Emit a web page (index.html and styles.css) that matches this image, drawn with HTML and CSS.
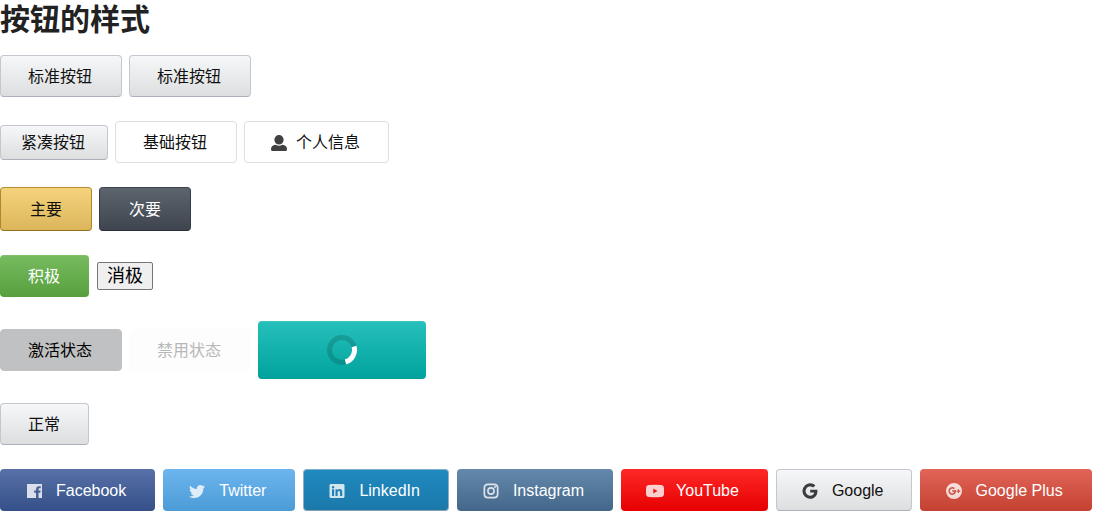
FILE: index.html
```
<!DOCTYPE html>
<html lang="zh-CN">
<head>
  <meta charset="UTF-8">
  <title>按钮的样式</title>
  <link rel="stylesheet" href="styles.css">
</head>
<body>

<h1>按钮的样式</h1>

<div class="row">
  <button class="btn">标准按钮</button>
  <button class="btn">标准按钮</button>
</div>

<div class="row">
  <button class="btn compact">紧凑按钮</button>
  <button class="btn basic">基础按钮</button>
  <button class="btn basic with-user">
    <svg class="icon" viewBox="0 0 16 16"><path d="M8 0a4.6 4.6 0 0 1 4.600 4.800C12.600 7.600 10.600 9.600 8 9.600S3.400 7.600 3.400 4.800A4.600 4.600 0 0 1 8 0zM4.500 9.800Q8 11.800 11.500 9.800Q16 10.500 16 14v.5q0 1.500-1.500 1.500h-13Q0 16 0 14.500V14q0-3.500 4.500-4.200z"/></svg>
    个人信息
  </button>
</div>

<div class="row">
  <button class="btn primary">主要</button>
  <button class="btn secondary">次要</button>
</div>

<div class="row wide">
  <button class="btn short positive">积极</button>
  <button class="plain">消极</button>
</div>

<div class="row">
  <button class="btn active">激活状态</button>
  <button class="btn disabled" disabled>禁用状态</button>
  <button class="btn loading" aria-label="加载中">
    <svg class="spinner" viewBox="0 0 30 30">
      <circle class="track" cx="15" cy="15" r="12.500"/>
      <path class="arc" d="M27 11.500A12.500 12.500 0 0 1 18.500 27"/>
    </svg>
  </button>
</div>

<div class="row">
  <button class="btn short">正常</button>
</div>

<div class="row wide">
  <button class="btn social facebook">
    <svg class="icon" viewBox="0 0 16 16"><path d="M1 1h15v14h-3.500V9.800h1.800l.3-2.200h-2.100V6.300c0-.7.3-1 1-1h1.200V3.200h-1.800C11.100 3.200 10.100 4.300 10.100 6v1.600H8.200v2.200h1.900V15H1z"/></svg>
    Facebook
  </button>
  <button class="btn social twitter">
    <svg class="icon" viewBox="0 0 16 16"><path d="M16 3.500q-.9.400-1.800.5Q15.200 3.400 15.600 2.200q-1 .6-2.100.8A3.300 3.300 0 0 0 7.900 6Q3.800 5.800 1.100 2.500C.2 4.100.7 5.900 2.100 6.900Q1.300 6.900.6 6.500q.1 2.500 2.700 3.300-.7.200-1.500.1.700 2.100 3.100 2.300Q2.800 13.800 0 13.500 2.200 15 5 15c6.100 0 9.500-5 9.400-9.800q1-.7 1.600-1.700z"/></svg>
    Twitter
  </button>
  <button class="btn social linkedin">
    <svg class="icon" viewBox="0 0 16 16"><path fill-rule="evenodd" d="M1.500 1h13l1 1v12l-1 1h-13l-1-1V2zM3 6.300V13h2.100V6.300zM4.100 3a1.200 1.200 0 1 0 0 2.400 1.200 1.200 0 1 0 0-2.400zM6.500 6.300V13h2.100V9.500c0-2 2.500-2 2.500 0V13h2.100V9c0-3.300-3.400-3.600-4.600-1.800v-.9z"/></svg>
    LinkedIn
  </button>
  <button class="btn social instagram">
    <svg class="icon" viewBox="0 0 16 16"><path fill-rule="evenodd" d="M5 .5h6q4.500 0 4.500 4.500v6q0 4.500-4.500 4.500H5Q.5 15.500.5 11V5Q.5.500 5 .5zM5 2.200Q2.200 2.200 2.200 5v6q0 2.800 2.800 2.800h6q2.800 0 2.800-2.800V5q0-2.800-2.800-2.800zM8 4.100a3.900 3.900 0 1 1 0 7.800 3.900 3.900 0 1 1 0-7.800zM8 5.700a2.300 2.300 0 1 0 0 4.600 2.300 2.300 0 1 0 0-4.600z"/><circle cx="12" cy="4" r="1"/></svg>
    Instagram
  </button>
  <button class="btn social youtube">
    <svg class="icon" viewBox="0 0 18 16"><path fill-rule="evenodd" d="M3 2Q9 1.500 15 2q3 .2 3 3.500v5q0 3.300-3 3.500-6 .5-12 0-3-.2-3-3.500v-5Q0 2.200 3 2zM7.300 5.500v5L11.500 8z"/></svg>
    YouTube
  </button>
  <button class="btn social google">
    <svg class="icon" viewBox="0 0 16 16"><path d="M8.200 6.700h7.100C16 11.500 13.200 15.700 8.200 15.700a7.700 7.700 0 1 1 5.200-13.400L11.200 4.400A4.700 4.700 0 1 0 8.200 12.800c2.100 0 3.500-1.100 4-3.200h-4z"/></svg>
    Google
  </button>
  <button class="btn social google-plus">
    <svg class="icon" viewBox="0 0 16 16"><path fill-rule="evenodd" d="M8 0a8 8 0 1 1 0 16A8 8 0 1 1 8 0zM6.200 7.200v1.500h2.200C8 10 7.200 10.400 6.200 10.400A2.400 2.400 0 1 1 7.800 6.200L8.900 5.100A3.900 3.900 0 1 0 6.200 11.900C8.900 11.900 10.300 9.700 10 7.200zM11.800 6.300v1.200h-1.200v1.200h1.200v1.200H13V8.700h1.200V7.500H13V6.300z"/></svg>
    Google Plus
  </button>
</div>

</body>
</html>
```
FILE: styles.css
```
body {
  margin: 0;
  background: #fff;
  color: #222;
  font-family: "Liberation Sans", "Noto Sans CJK SC", sans-serif;
}

h1 {
  margin: 0 0 15px;
  font-size: 30px;
  line-height: 40px;
}

.row {
  display: flex;
  align-items: center;
  gap: 7px;
  margin-bottom: 24px;
}

.row.wide {
  gap: 8px;
}

.row:last-child {
  margin-bottom: 0;
}

.btn {
  display: flex;
  align-items: center;
  justify-content: center;
  box-sizing: border-box;
  height: 42px;
  padding: 2px 29px 0 27px;
  border: 1px solid #c5c7cf;
  border-bottom-color: #abb0bb;
  border-radius: 4px;
  background: linear-gradient(#f6f7f9, #dddee0);
  color: #111;
  font-family: inherit;
  font-size: 16px;
  line-height: 24px;
  white-space: nowrap;
  cursor: pointer;
}

.icon {
  width: 16px;
  height: 16px;
  fill: currentColor;
  opacity: 0.8;
}

.short {
  padding: 2px 28px 0 27px;
}

.compact {
  height: 35px;
  padding: 2px 22px 0 20px;
}

.basic {
  background: #fff;
  border-color: #dedfe0;
}

.with-user {
  gap: 9px;
  padding: 2px 28px 0 26px;
}

.primary {
  height: 44px;
  border-color: #b58e34 #b08626 #96701b;
  background: linear-gradient(#f5d27c, #dbb65b);
}

.secondary {
  height: 44px;
  border-color: #3c434c #353b45 #292f38;
  background: linear-gradient(#5c646d, #3e454e);
  color: #fff;
}

.primary,
.secondary {
  padding: 2px 29px 0;
}

.positive {
  border-color: #80c169 transparent #579f3e;
  background: linear-gradient(#77bc60, #579f3e) border-box;
  color: #fff;
}

.plain {
  height: 28px;
  padding: 0 9px;
  border: 1px solid #767676;
  border-radius: 2px;
  background: #efefef;
  color: #000;
  font-family: inherit;
  font-size: 18px;
  line-height: 24px;
}

.active {
  border-color: #c0c1c2;
  background: #c0c1c2;
  color: #000;
}

.disabled {
  border-color: #fdfdfd;
  background: #fdfdfd;
  color: #b8b8b8;
  cursor: default;
}

.loading {
  width: 168px;
  height: 58px;
  padding: 0;
  border-color: #34c5c0 transparent #009d98;
  background: linear-gradient(#27c0bb, #00a29d) border-box;
}

.spinner {
  width: 30px;
  height: 30px;
  fill: none;
  stroke-width: 5;
}

.track {
  stroke: #000;
  stroke-opacity: 0.15;
}

.arc {
  stroke: #fff;
}

.social {
  gap: 14px;
  padding: 1px 28px 0 25px;
  border-color: transparent;
  color: #fff;
}

.facebook {
  background: linear-gradient(#5871a8, #354f88) border-box;
}

.twitter {
  background: linear-gradient(#6db5ee, #4b9bd7) border-box;
}

.linkedin {
  border-color: #7faecb #91acc0 #859eb1;
  background: linear-gradient(#2089bf, #1b79aa);
}

.instagram {
  background: linear-gradient(#6589ab, #43678a) border-box;
}

.youtube {
  gap: 12px;
  padding-left: 24px;
  background: linear-gradient(#ff2828, #e60000) border-box;
}

.youtube .icon {
  width: 18px;
}

.google {
  padding-right: 27px;
  border-color: #c5c7cf #c5c7cf #abb0bb;
  color: #111;
}

.google-plus {
  background: linear-gradient(#e16558, #c44131) border-box;
}
```
